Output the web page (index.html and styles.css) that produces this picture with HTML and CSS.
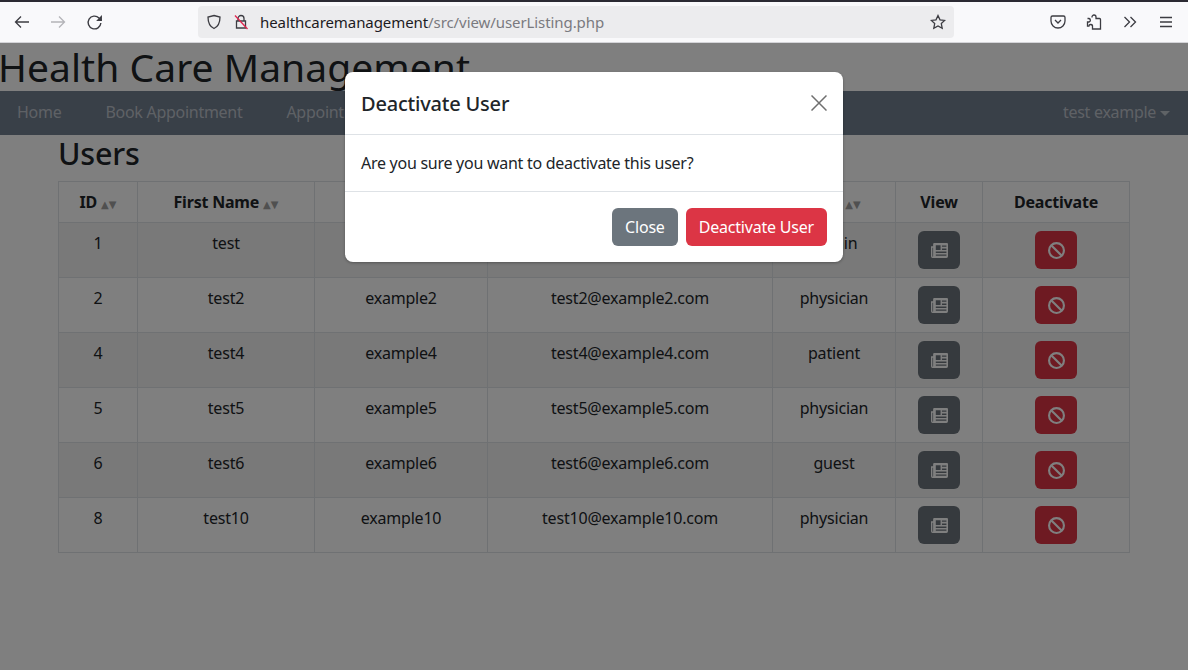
FILE: index.html
```html
<!DOCTYPE html>
<html lang="en">
<head>
    <meta charset="UTF-8">
    <title>User Listing</title>
    <link rel="stylesheet" href="styles.css">
</head>
<body>
    <header class="browser">
        <div class="nav-buttons">
            <svg class="tool" viewBox="0 0 16 16"><path d="M15 8H1.500M7 2.500 1.500 8 7 13.500"/></svg>
            <svg class="tool tool-off" viewBox="0 0 16 16"><path d="M1 8h13.500M9 2.500 14.500 8 9 13.500"/></svg>
            <svg class="tool tool-big" viewBox="0 0 16 16"><path d="M14 8.500a6 6 0 1 1-1.800-4.800L14.500 6"/><path class="solid" d="M15 1v5.500H9.500z"/></svg>
        </div>
        <div class="urlbar">
            <svg class="tool" viewBox="0 0 16 16"><path d="M8 1.500 14 3c0 6-1.500 9.500-6 11.500C3.500 12.500 2 9 2 3z"/></svg>
            <svg class="tool lock" viewBox="0 0 16 16"><path d="M5 7V4.500a3 3 0 0 1 6 0V7M3.500 7h9v7h-9z"/><path class="slash" d="M2 1.500 14.500 15"/></svg>
            <span class="url"><span class="host">healthcaremanagement</span>/src/view/userListing.php</span>
            <svg class="tool star" viewBox="0 0 16 16"><path d="m8 1.500 2 4.300 4.700.6-3.400 3.200.9 4.700L8 12l-4.200 2.300.9-4.700L1.300 6.400 6 5.800z"/></svg>
        </div>
        <div class="tools-right">
            <svg class="tool" viewBox="0 0 16 16"><path d="M2.500 2h11A1.500 1.500 0 0 1 15 3.500V7A7 7 0 0 1 1 7V3.500A1.500 1.500 0 0 1 2.500 2zM5 6l3 3 3-3"/></svg>
            <svg class="tool" viewBox="0 0 16 16"><path d="M6 3.500V3a2 2 0 0 1 4 0v1.500h3.500a1 1 0 0 1 1 1V15H6.500v-2.500a1.800 1.800 0 0 0-3.600-.4H1.500V8H3a1.800 1.800 0 0 0 0-3.500H1.500"/></svg>
            <svg class="tool" viewBox="0 0 16 16"><path d="m2.500 3 5 5-5 5M8.500 3l5 5-5 5"/></svg>
            <svg class="tool" viewBox="0 0 16 16"><path d="M2 3.500h12M2 8h12M2 12.500h12"/></svg>
        </div>
    </header>

    <main class="page">
        <h1 class="site-title">Health Care Management</h1>
        <nav class="navbar">
            <a class="nav-link" href="#">Home</a>
            <a class="nav-link" href="#">Book Appointment</a>
            <a class="nav-link" href="#">Appointments</a>
            <a class="nav-link nav-user" href="#">test example <span class="caret"></span></a>
        </nav>
        <section class="container">
            <h2 class="page-title">Users</h2>
            <table class="users">
                <colgroup>
                    <col class="col-id"><col class="col-first"><col class="col-last"><col class="col-email"><col class="col-role"><col class="col-view"><col class="col-off">
                </colgroup>
                <thead>
                    <tr>
                        <th>ID <span class="sort">▲▼</span></th>
                        <th>First Name <span class="sort">▲▼</span></th>
                        <th>Last Name <span class="sort">▲▼</span></th>
                        <th>Email <span class="sort">▲▼</span></th>
                        <th>Role <span class="sort">▲▼</span></th>
                        <th>View</th>
                        <th>Deactivate</th>
                    </tr>
                </thead>
                <tbody id="rows">
                    <tr><td>1</td><td>test</td><td>example1</td><td>test1@example1.com</td><td>admin</td>
                        <td><button class="icon-btn btn-view"><svg viewBox="0 0 16 16"><use href="#paper"/></svg></button></td>
                        <td><button class="icon-btn btn-off"><svg viewBox="0 0 16 16"><use href="#ban"/></svg></button></td></tr>
                    <tr><td>2</td><td>test2</td><td>example2</td><td>test2@example2.com</td><td>physician</td>
                        <td><button class="icon-btn btn-view"><svg viewBox="0 0 16 16"><use href="#paper"/></svg></button></td>
                        <td><button class="icon-btn btn-off"><svg viewBox="0 0 16 16"><use href="#ban"/></svg></button></td></tr>
                    <tr><td>4</td><td>test4</td><td>example4</td><td>test4@example4.com</td><td>patient</td>
                        <td><button class="icon-btn btn-view"><svg viewBox="0 0 16 16"><use href="#paper"/></svg></button></td>
                        <td><button class="icon-btn btn-off"><svg viewBox="0 0 16 16"><use href="#ban"/></svg></button></td></tr>
                    <tr><td>5</td><td>test5</td><td>example5</td><td>test5@example5.com</td><td>physician</td>
                        <td><button class="icon-btn btn-view"><svg viewBox="0 0 16 16"><use href="#paper"/></svg></button></td>
                        <td><button class="icon-btn btn-off"><svg viewBox="0 0 16 16"><use href="#ban"/></svg></button></td></tr>
                    <tr><td>6</td><td>test6</td><td>example6</td><td>test6@example6.com</td><td>guest</td>
                        <td><button class="icon-btn btn-view"><svg viewBox="0 0 16 16"><use href="#paper"/></svg></button></td>
                        <td><button class="icon-btn btn-off"><svg viewBox="0 0 16 16"><use href="#ban"/></svg></button></td></tr>
                    <tr><td>8</td><td>test10</td><td>example10</td><td>test10@example10.com</td><td>physician</td>
                        <td><button class="icon-btn btn-view"><svg viewBox="0 0 16 16"><use href="#paper"/></svg></button></td>
                        <td><button class="icon-btn btn-off"><svg viewBox="0 0 16 16"><use href="#ban"/></svg></button></td></tr>
                </tbody>
            </table>
        </section>

        <div class="backdrop"></div>
        <div class="modal">
            <div class="modal-header">
                <h5 class="modal-title">Deactivate User</h5>
                <svg class="modal-close" viewBox="0 0 16 16"><path d="M.5.500l15 15M15.500.500l-15 15"/></svg>
            </div>
            <div class="modal-body">Are you sure you want to deactivate this user?</div>
            <div class="modal-footer">
                <button class="btn btn-close">Close</button>
                <button class="btn btn-danger">Deactivate User</button>
            </div>
        </div>
    </main>

    <!-- icons used in the table -->
    <svg class="sprites">
        <symbol id="paper" viewBox="0 0 16 16">
            <path fill-rule="evenodd" d="M3 1h12a1 1 0 0 1 1 1v11.500a1.500 1.500 0 0 1-1.500 1.500h-13A1.500 1.500 0 0 1 0 13.500V4h2V2a1 1 0 0 1 1-1zM1.300 5.300v8.200a.35.350 0 0 0 .7 0V5.300zM4.500 3v4.500h4.500V3zM10.300 3.200v1.300h4.200V3.200zm0 3v1.300h4.200V6.200zM4.500 9v1.300h10V9zm0 2.700V13h10v-1.300z"/>
        </symbol>
        <symbol id="ban" viewBox="0 0 16 16">
            <circle cx="8" cy="8" r="7" fill="none" stroke="currentColor" stroke-width="2"/>
            <path d="M3 3l10 10" fill="none" stroke="currentColor" stroke-width="2"/>
        </symbol>
    </svg>
</body>
</html>
```

FILE: styles.css
```css
* {
    box-sizing: border-box;
}
html, body {
    height: 100%;
}
body {
    margin: 0;
    overflow: hidden;
    display: flex;
    flex-direction: column;
    font-family: "Noto Sans", "Open Sans", sans-serif;
    font-size: 16px;
    letter-spacing: -0.2px;
    color: #212529;
    background: #fff;
}

/* browser toolbar */
.browser {
    flex: none;
    height: 43px;
    display: flex;
    align-items: center;
    background: #f9f9fb;
    border-top: 2px solid #2b2a33;
    border-bottom: 1px solid #d4d4d8;
    padding: 0 14px;
}
.tool {
    width: 16px;
    height: 16px;
    flex: none;
    fill: none;
    stroke: #3c3c42;
    stroke-width: 1.3;
}
.tool-off {
    stroke: #b4b4b8;
}
.tool-big {
    width: 17px;
    height: 17px;
}
.tool .solid {
    fill: #3c3c42;
    stroke: none;
}
.nav-buttons {
    display: flex;
    align-items: center;
    gap: 20px;
    width: 184px;
}
.urlbar {
    width: 756px;
    height: 32px;
    display: flex;
    align-items: center;
    gap: 11px;
    padding: 0 8px;
    background: #ececee;
    border-radius: 4px;
}
.lock .slash {
    stroke: #e0254f;
}
.url {
    flex: 1;
    font-size: 15px;
    letter-spacing: -0.08px;
    color: #7a7a7f;
}
.host {
    color: #1c1b22;
}
.tools-right {
    display: flex;
    gap: 20px;
    margin-left: 96px;
}

/* page */
.page {
    flex: 1;
    position: relative;
    overflow: hidden;
}
.site-title {
    margin: 0 0 0 -2px;
    height: 48px;
    font-size: 39px;
    font-weight: 400;
    line-height: 48px;
    letter-spacing: 0.05px;
}
.navbar {
    height: 44px;
    display: flex;
    align-items: center;
    gap: 44px;
    padding: 0 18px 2px 17px;
    background: #728090;
    letter-spacing: -0.28px;
}
.nav-link {
    color: rgba(255, 255, 255, 0.55);
    text-decoration: none;
}
.nav-user {
    margin-left: auto;
}
.caret {
    display: inline-block;
    width: 0;
    height: 0;
    vertical-align: 2px;
    border-top: 5px solid;
    border-left: 5px solid transparent;
    border-right: 5px solid transparent;
}
.container {
    padding: 0 58px;
}
.page-title {
    margin: 0;
    height: 46px;
    font-size: 30.5px;
    font-weight: 500;
    line-height: 36px;
}

/* table */
.users {
    width: 1072px;
    table-layout: fixed;
    border-collapse: collapse;
    text-align: center;
}
.col-id { width: 79px; }
.col-first { width: 177px; }
.col-last { width: 173px; }
.col-email { width: 285px; }
.col-role { width: 123px; }
.col-view { width: 87px; }
.users th, .users td {
    border: 1px solid #dee2e6;
    padding: 8px 8px 0;
    line-height: 24px;
    vertical-align: top;
}
.users th {
    height: 41px;
    font-weight: 700;
}
.users td {
    height: 55px;
}
.users tbody tr:nth-child(odd) td {
    background: #f2f2f2;
}
.sort {
    font-family: "DejaVu Sans", sans-serif;
    font-size: 10px;
    font-weight: 400;
    letter-spacing: 0;
    color: #a0a0a0;
}
.icon-btn {
    width: 42px;
    height: 38px;
    display: block;
    margin: 0 auto;
    padding: 0;
    border: none;
    border-radius: 6px;
    color: #fff;
}
.icon-btn svg {
    display: block;
    width: 17px;
    height: 17px;
    margin: 0 auto;
    fill: currentColor;
}
.btn-view {
    background: #6c757d;
}
.btn-off {
    background: #dc3545;
}

/* modal */
.backdrop {
    position: absolute;
    inset: 0;
    background: rgba(0, 0, 0, 0.5);
}
.modal {
    position: absolute;
    left: 345px;
    top: 29px;
    width: 498px;
    height: 190px;
    background: #fff;
    border-radius: 8px;
    box-shadow: 0 1px 3px rgba(0, 0, 0, 0.3);
}
.modal-header {
    height: 63px;
    display: flex;
    align-items: center;
    justify-content: space-between;
    padding: 1px 16px 0;
    border-bottom: 1px solid #dee2e6;
}
.modal-title {
    margin: 0;
    font-size: 20px;
    font-weight: 500;
}
.modal-close {
    width: 16px;
    height: 16px;
    margin-top: -1px;
    fill: none;
    stroke: #6f6f6f;
    stroke-width: 1.5;
}
.modal-body {
    height: 57px;
    padding: 0 16px;
    display: flex;
    align-items: center;
    letter-spacing: -0.27px;
    border-bottom: 1px solid #dee2e6;
}
.modal-footer {
    display: flex;
    justify-content: flex-end;
    gap: 8px;
    padding: 16px 16px 0;
}
.btn {
    height: 38px;
    padding: 0 13px;
    border: none;
    border-radius: 6px;
    color: #fff;
    font: inherit;
    letter-spacing: inherit;
}
.btn-close {
    background: #6c757d;
}
.btn-danger {
    background: #dc3545;
}
.sprites {
    display: none;
}
```
